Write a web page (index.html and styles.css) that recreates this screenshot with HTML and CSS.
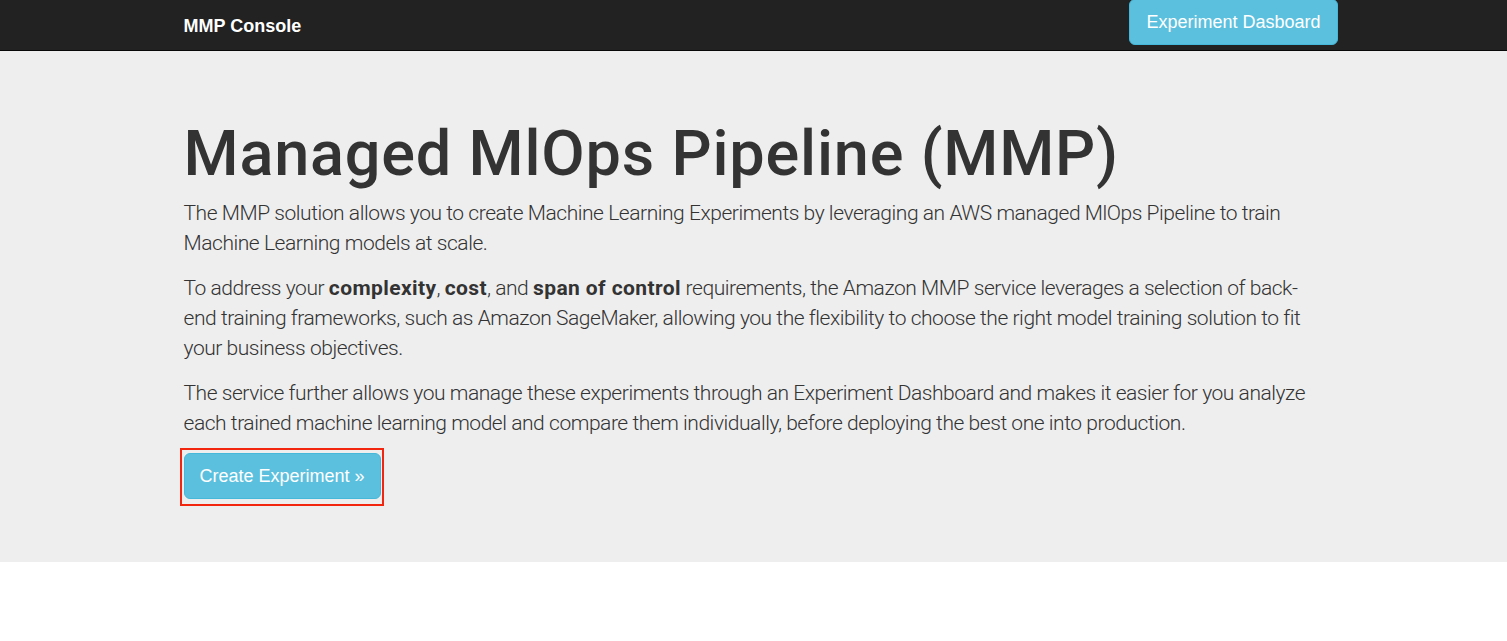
FILE: index.html
```html
<!DOCTYPE html>
<html>
<head>
<meta charset="utf-8">
<title>MMP Console</title>
<link rel="stylesheet" href="styles.css">
</head>
<body>
<nav class="navbar">
  <div class="container nav-inner">
    <a class="brand" href="#">MMP Console</a>
    <a class="btn btn-info btn-lg nav-btn" href="#">Experiment Dasboard</a>
  </div>
</nav>
<section class="jumbotron">
  <div class="container">
    <h1 class="title">Managed MlOps Pipeline (MMP)</h1>
    <p class="lead">The MMP solution allows you to create Machine Learning Experiments by leveraging an AWS managed MlOps Pipeline to train Machine Learning models at scale.</p>
    <p class="lead">To address your <strong>complexity</strong>, <strong>cost</strong>, and <strong>span of control</strong> requirements, the Amazon MMP service leverages a selection of back-end training frameworks, such as Amazon SageMaker, allowing you the flexibility to choose the right model training solution to fit your business objectives.</p>
    <p class="lead">The service further allows you manage these experiments through an Experiment Dashboard and makes it easier for you analyze each trained machine learning model and compare them individually, before deploying the best one into production.</p>
    <p class="lead action"><a class="btn btn-info btn-lg highlight" href="#">Create Experiment &raquo;</a></p>
  </div>
</section>
</body>
</html>
```
FILE: styles.css
```css
* { box-sizing: border-box; }
html, body { margin: 0; padding: 0; }
body {
  font-family: "Liberation Sans", Arial, sans-serif;
  font-size: 14px;
  line-height: 1.42857;
  color: #333;
  background: #fff;
}
.container {
  width: 1170px;
  margin: 0 auto;
  padding: 0 15px;
}
.navbar {
  height: 51px;
  background: #222;
  border-bottom: 1px solid #080808;
}
.nav-inner {
  display: flex;
  justify-content: space-between;
  align-items: flex-start;
  height: 50px;
}
.brand {
  color: #fff;
  font-weight: bold;
  font-size: 18px;
  line-height: 20px;
  padding: 16px 0 14px;
  text-decoration: none;
}
.btn {
  display: inline-block;
  text-decoration: none;
  color: #fff;
  background: #5bc0de;
  border: 1px solid #46b8da;
  border-radius: 6px;
}
.btn-lg {
  padding: 10px 16px;
  font-size: 18px;
  line-height: 24px;
}
.nav-btn {
  margin-right: -14px;
  margin-top: -1px;
}
.jumbotron {
  background: #eee;
  padding: 48px 0;
}
.title {
  font-family: Roboto, "Liberation Sans", sans-serif;
  font-size: 63px;
  line-height: 69px;
  font-weight: 500;
  margin: 20px 0 10px;
  letter-spacing: 0.8px;
}
.lead {
  font-family: Roboto, "Liberation Sans", sans-serif;
  font-size: 21px;
  font-weight: 300;
  line-height: 30px;
  letter-spacing: -0.45px;
  margin: 0 0 15px;
}
.lead strong { font-weight: 700; letter-spacing: 0.4px; }
.action { display: flex; }
.highlight {
  position: relative;
  font-family: "Liberation Sans", Arial, sans-serif;
  font-weight: normal;
  letter-spacing: 0;
  padding: 10px 15px;
}
.highlight::after {
  content: "";
  position: absolute;
  top: -6px;
  bottom: -8px;
  left: -5px;
  right: -4px;
  border: 2px solid #f2260f;
}
```
